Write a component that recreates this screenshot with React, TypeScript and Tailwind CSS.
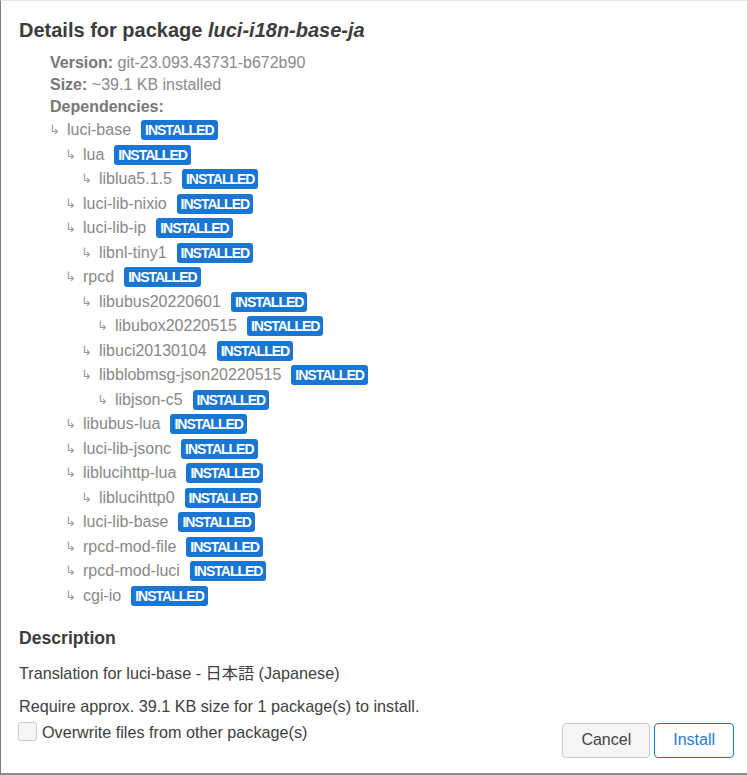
import React from "react";

const deps: [number, string][] = [
  [1, "luci-base"],
  [2, "lua"],
  [3, "liblua5.1.5"],
  [2, "luci-lib-nixio"],
  [2, "luci-lib-ip"],
  [3, "libnl-tiny1"],
  [2, "rpcd"],
  [3, "libubus20220601"],
  [4, "libubox20220515"],
  [3, "libuci20130104"],
  [3, "libblobmsg-json20220515"],
  [4, "libjson-c5"],
  [2, "libubus-lua"],
  [2, "luci-lib-jsonc"],
  [2, "liblucihttp-lua"],
  [3, "liblucihttp0"],
  [2, "luci-lib-base"],
  [2, "rpcd-mod-file"],
  [2, "rpcd-mod-luci"],
  [2, "cgi-io"],
];

const indent: Record<number, string> = {
  1: "pl-[48px]",
  2: "pl-[64px]",
  3: "pl-[80px]",
  4: "pl-[96px]",
};

export default function App() {
  return (
    <div className="w-[747px] h-[775px] box-border bg-white border-l border-t border-b-2 border-l-[#7d7d70] border-t-[#e6e6e6] border-b-[#8c8c8c] font-['Liberation_Sans',Arial,'Noto_Sans_CJK_JP',sans-serif] text-[16px] text-[#404040] flex flex-col">
      <h3 className="ml-[18px] mt-[17px] text-[20px] leading-[24px] font-bold text-[#3c3c3c]">
        Details for package <em className="italic">luci-i18n-base-ja</em>
      </h3>
      <div className="ml-[49px] mt-[9.5px] leading-[22px] text-[#8a8a8a]">
        <div>
          <span className="font-bold text-[#777777]">Version:</span> git-23.093.43731-b672b90
        </div>
        <div>
          <span className="font-bold text-[#777777]">Size:</span> ~39.1 KB installed
        </div>
        <div>
          <span className="font-bold text-[#777777]">Dependencies:</span>
        </div>
      </div>
      <ul className="mt-[0.5px] text-[#888888]">
        {deps.map(([lvl, name], i) => (
          <li key={i} className={`h-[24.5px] flex items-center leading-[22px] ${indent[lvl]}`}>
            <span className="w-[18px] text-[13px] text-[#999999] font-['DejaVu_Sans',sans-serif]">↳</span>
            <span>{name}</span>
            <span className="ml-[10px] h-[20px] leading-[20px] px-[4px] rounded-[3px] bg-[#1976d2] text-white font-bold text-[14px] tracking-[-1px]">
              INSTALLED
            </span>
          </li>
        ))}
      </ul>
      <h4 className="ml-[18px] mt-[18px] text-[17.6px] leading-[24px] font-bold text-[#3c3c3c]">Description</h4>
      <p className="ml-[18px] mt-[12px] leading-[22px] text-[16.2px]">Translation for luci-base - 日本語 (Japanese)</p>
      <p className="ml-[18px] mt-[10.5px] leading-[22px] text-[16.2px]">Require approx. 39.1 KB size for 1 package(s) to install.</p>
      <div className="mt-[4px] flex items-start justify-between pl-[17px] pr-[13px]">
        <label className="flex items-center h-[22px] leading-[22px] text-[16.2px]">
          <span className="w-[19px] h-[19px] rounded-[3px] border border-[#cccccc] bg-[#f5f5f5]" />
          <span className="ml-[5px]">Overwrite files from other package(s)</span>
        </label>
        <div className="mt-[2px] flex gap-[4px]">
          <button className="h-[35px] px-[18px] rounded-[4px] border border-[#cccccc] bg-[#f5f5f5] text-[#444444] text-[16px]">
            Cancel
          </button>
          <button className="h-[35px] px-[18px] rounded-[4px] border border-[#1976d2] bg-white text-[#2a7bd0] text-[16px]">
            Install
          </button>
        </div>
      </div>
    </div>
  );
}
